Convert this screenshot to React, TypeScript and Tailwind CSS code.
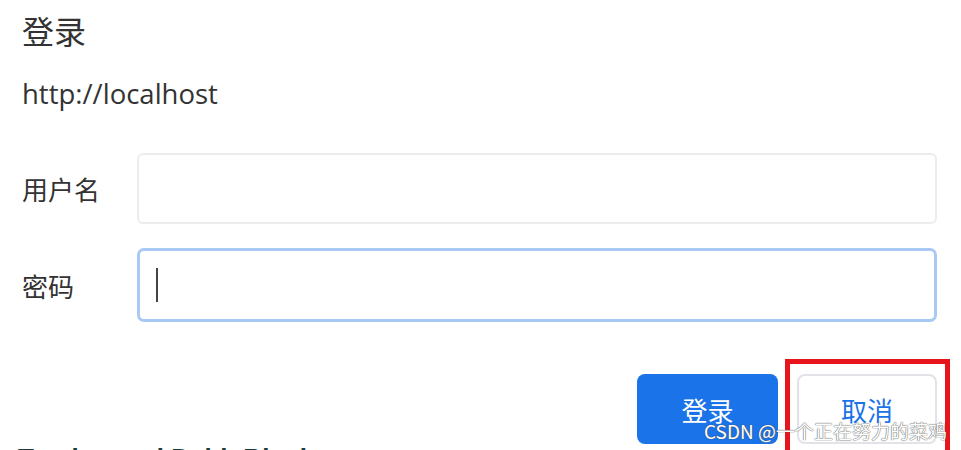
import React from 'react';

const cjk = { fontFamily: '"Noto Sans CJK SC", "Noto Sans", sans-serif' };

// Field row: label on the left, input box on the right
function Field({ label, focused }: { label: string; focused?: boolean }) {
  return (
    <div className="flex items-center">
      <div className="w-[115px] shrink-0 text-[26px] text-[#333]">{label}</div>
      <div
        className={
          focused
            ? 'relative flex h-[74px] flex-1 items-center rounded-[7px] border-[3px] border-[#a8c8f5] bg-white pl-[16px]'
            : 'relative h-[71px] flex-1 rounded-[6px] border-2 border-[#ececec] bg-white'
        }
      >
        {focused && <div className="h-[34px] w-[2px] bg-[#444]" />}
      </div>
    </div>
  );
}

export default function App() {
  return (
    <div
      className="relative h-[450px] w-[961px] overflow-hidden bg-white pl-[22px] pr-[24px] pt-[8px]"
      style={cjk}
    >
      <div className="text-[32px] leading-[44px] text-[#333]">登录</div>
      <div
        className="mt-[24px] text-[27.5px] leading-[36px] text-[#333]"
        style={{ fontFamily: '"Open Sans", "Noto Sans CJK SC", sans-serif' }}
      >
        http://localhost
      </div>

      <div className="mt-[41px] flex flex-col gap-[24px]">
        <Field label="用户名" />
        <Field label="密码" focused />
      </div>

      <div className="mt-[52px] flex justify-end gap-[19px]">
        <button className="flex h-[70px] w-[141px] items-center justify-center rounded-[8px] bg-[#1a73e8] text-[26px] text-white">
          登录
        </button>
        <button className="flex h-[70px] w-[140px] items-center justify-center rounded-[8px] border-2 border-[#e2e3e8] bg-white text-[26px] text-[#1a73e8]">
          取消
        </button>
      </div>

      <div
        className="ml-[-4px] mt-[-1px] text-[26px] font-bold leading-[30px] text-[#1c3b3b]"
        style={{ fontFamily: '"Liberation Sans", sans-serif' }}
      >
        Tracing and Debit Block
      </div>

      {/* red annotation box */}
      <div className="absolute left-[785px] top-[359px] h-[100px] w-[165px] border-[5px] border-[#e8141c]" />

      {/* watermark */}
      <div
        className="absolute left-[704px] top-[417px] text-[19px] text-white"
        style={{ textShadow: '0 0 1px #555, 0 0 1px #555' }}
      >
        CSDN @一个正在努力的菜鸡
      </div>
    </div>
  );
}
